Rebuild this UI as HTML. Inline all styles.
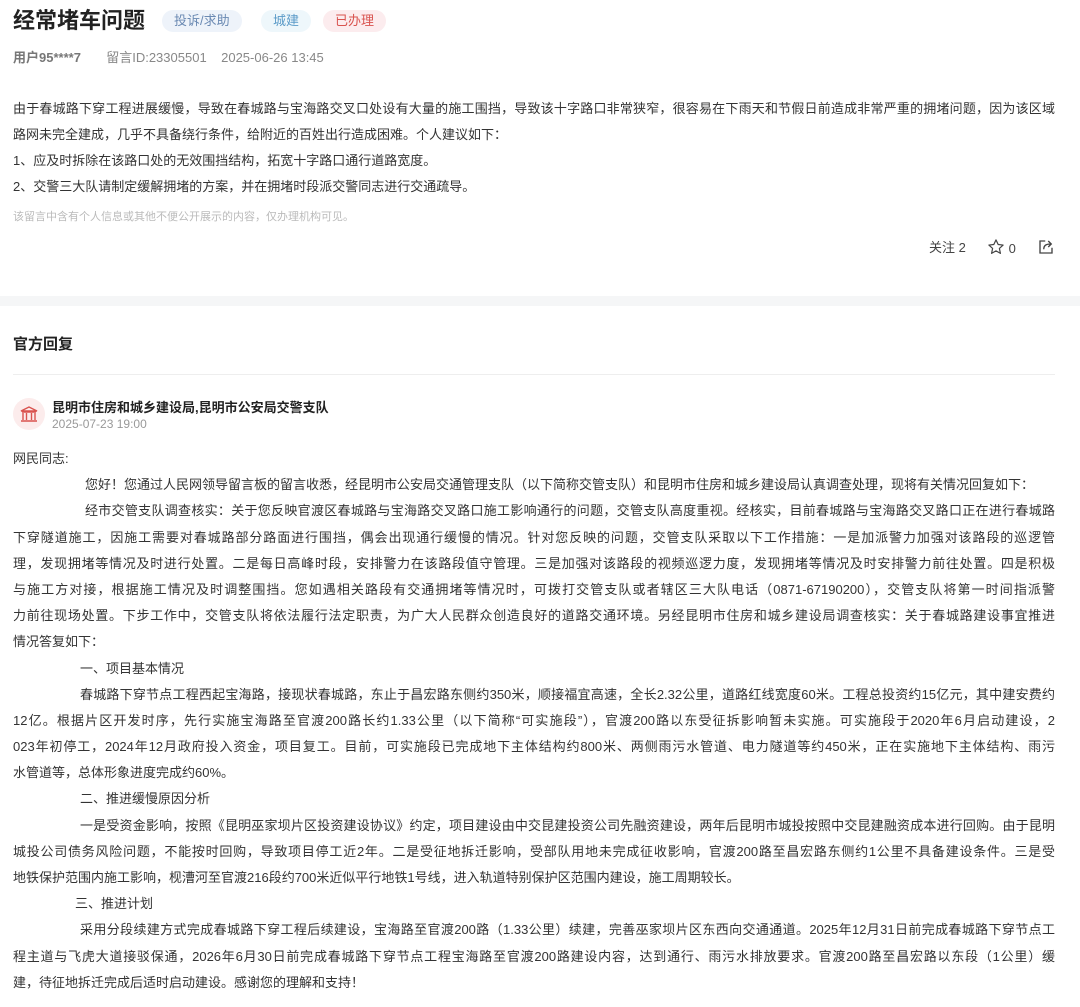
<!DOCTYPE html>
<html><head><meta charset="utf-8">
<style>
*{margin:0;padding:0;box-sizing:border-box}
body{width:1080px;height:1007px;overflow:hidden;background:#fff;font-family:"Liberation Sans","Noto Sans CJK SC",sans-serif;color:#333}
.t{position:absolute;left:13px;top:6px;font-size:22px;font-weight:bold;color:#222;line-height:30px}
.tag{position:absolute;top:10px;height:22px;line-height:22px;border-radius:11px;font-size:13px;padding:0 12px}
.meta{position:absolute;left:13px;top:49px;font-size:13px;color:#888;line-height:18px}
.meta b{color:#777}
.p{position:absolute;left:13px;width:1042px;font-size:13px;line-height:26px;color:#333}
.l{white-space:nowrap;height:26px}
.r .l{height:26.2px}
.j{text-align:justify;text-align-last:justify;white-space:normal;overflow:hidden}
.note{position:absolute;left:13px;top:208px;font-size:11px;color:#bbb}
.act{position:absolute;top:239px;font-size:13px;color:#444;line-height:18px}
.band{position:absolute;left:0;top:296px;width:1080px;height:10px;background:#f5f6f7}
.h{position:absolute;left:13px;top:333px;font-size:15px;font-weight:bold;color:#222}
.hr{position:absolute;left:13px;top:374px;width:1042px;height:1px;background:#eee}
.ic{position:absolute;left:13px;top:398px;width:32px;height:32px;border-radius:50%;background:#fcecec}
.nm{position:absolute;left:52px;top:397px;font-size:13px;font-weight:bold;color:#222}
.dt{position:absolute;left:52px;top:417px;font-size:12px;color:#999}
</style></head><body>
<div class="t">经常堵车问题</div>
<div class="tag" style="left:162px;background:#eef3fa;color:#6b8ab3">投诉/求助</div>
<div class="tag" style="left:261px;background:#eef7fb;color:#5b9bc8">城建</div>
<div class="tag" style="left:323px;background:#fcecee;color:#d9534f">已办理</div>
<div class="meta"><b>用户95****7</b>&nbsp;&nbsp;&nbsp;&nbsp;&nbsp;&nbsp;&nbsp;留言ID:23305501&nbsp;&nbsp;&nbsp;&nbsp;2025-06-26 13:45</div>
<div class="p" style="top:96px">
<div class="l j">由于春城路下穿工程进展缓慢，导致在春城路与宝海路交叉口处设有大量的施工围挡，导致该十字路口非常狭窄，很容易在下雨天和节假日前造成非常严重的拥堵问题，因为该区域</div>
<div class="l">路网未完全建成，几乎不具备绕行条件，给附近的百姓出行造成困难。个人建议如下：</div>
<div class="l">1、应及时拆除在该路口处的无效围挡结构，拓宽十字路口通行道路宽度。</div>
<div class="l">2、交警三大队请制定缓解拥堵的方案，并在拥堵时段派交警同志进行交通疏导。</div>
</div>
<div class="note">该留言中含有个人信息或其他不便公开展示的内容，仅办理机构可见。</div>
<div class="act" style="left:929px">关注 2</div>
<div class="act" style="left:987px;top:238px"><svg width="18" height="18" viewBox="0 0 24 24" style="vertical-align:-3px"><path d="M12 2.5l2.9 6.2 6.6.7-5 4.5 1.4 6.6L12 17.2l-5.9 3.3 1.4-6.6-5-4.5 6.6-.7z" fill="none" stroke="#444" stroke-width="1.6" stroke-linejoin="round"/></svg> 0</div>
<div class="act" style="left:1037px;top:238px"><svg width="18" height="18" viewBox="0 0 24 24"><path d="M11 4H4v16h16v-7" fill="none" stroke="#444" stroke-width="1.8"/><path d="M9 15c0-5 3-7 9-7M15 4l4 4-4 4" fill="none" stroke="#444" stroke-width="1.8"/></svg></div>
<div class="band"></div>
<div class="h">官方回复</div>
<div class="hr"></div>
<div class="ic"><svg width="32" height="32" viewBox="0 0 32 32"><path d="M8 13l8-4 8 4zM9 14h14M10 15v7M13.5 15v7M18.5 15v7M22 15v7M8 23h16" fill="none" stroke="#d9534f" stroke-width="1.4"/></svg></div>
<div class="nm">昆明市住房和城乡建设局,昆明市公安局交警支队</div>
<div class="dt">2025-07-23 19:00</div>
<div class="p r" style="top:446px;line-height:26.2px">
<div class="l">网民同志:</div>
<div class="l" style="padding-left:72px">您好！您通过人民网领导留言板的留言收悉，经昆明市公安局交通管理支队（以下简称交管支队）和昆明市住房和城乡建设局认真调查处理，现将有关情况回复如下：</div>
<div class="l j" style="padding-left:72px">经市交管支队调查核实：关于您反映官渡区春城路与宝海路交叉路口施工影响通行的问题，交管支队高度重视。经核实，目前春城路与宝海路交叉路口正在进行春城路</div>
<div class="l j">下穿隧道施工，因施工需要对春城路部分路面进行围挡，偶会出现通行缓慢的情况。针对您反映的问题，交管支队采取以下工作措施：一是加派警力加强对该路段的巡逻管</div>
<div class="l j">理，发现拥堵等情况及时进行处置。二是每日高峰时段，安排警力在该路段值守管理。三是加强对该路段的视频巡逻力度，发现拥堵等情况及时安排警力前往处置。四是积极</div>
<div class="l j">与施工方对接，根据施工情况及时调整围挡。您如遇相关路段有交通拥堵等情况时，可拨打交管支队或者辖区三大队电话（0871-67190200），交管支队将第一时间指派警</div>
<div class="l j">力前往现场处置。下步工作中，交管支队将依法履行法定职责，为广大人民群众创造良好的道路交通环境。另经昆明市住房和城乡建设局调查核实：关于春城路建设事宜推进</div>
<div class="l">情况答复如下：</div>
<div class="l" style="padding-left:67px">一、项目基本情况</div>
<div class="l j" style="padding-left:67px">春城路下穿节点工程西起宝海路，接现状春城路，东止于昌宏路东侧约350米，顺接福宜高速，全长2.32公里，道路红线宽度60米。工程总投资约15亿元，其中建安费约</div>
<div class="l j">12亿。根据片区开发时序，先行实施宝海路至官渡200路长约1.33公里（以下简称“可实施段”），官渡200路以东受征拆影响暂未实施。可实施段于2020年6月启动建设，2</div>
<div class="l j">023年初停工，2024年12月政府投入资金，项目复工。目前，可实施段已完成地下主体结构约800米、两侧雨污水管道、电力隧道等约450米，正在实施地下主体结构、雨污</div>
<div class="l">水管道等，总体形象进度完成约60%。</div>
<div class="l" style="padding-left:67px">二、推进缓慢原因分析</div>
<div class="l j" style="padding-left:67px">一是受资金影响，按照《昆明巫家坝片区投资建设协议》约定，项目建设由中交昆建投资公司先融资建设，两年后昆明市城投按照中交昆建融资成本进行回购。由于昆明</div>
<div class="l j">城投公司债务风险问题，不能按时回购，导致项目停工近2年。二是受征地拆迁影响，受部队用地未完成征收影响，官渡200路至昌宏路东侧约1公里不具备建设条件。三是受</div>
<div class="l">地铁保护范围内施工影响，枧漕河至官渡216段约700米近似平行地铁1号线，进入轨道特别保护区范围内建设，施工周期较长。</div>
<div class="l" style="padding-left:62px">三、推进计划</div>
<div class="l j" style="padding-left:67px">采用分段续建方式完成春城路下穿工程后续建设，宝海路至官渡200路（1.33公里）续建，完善巫家坝片区东西向交通通道。2025年12月31日前完成春城路下穿节点工</div>
<div class="l j">程主道与飞虎大道接驳保通，2026年6月30日前完成春城路下穿节点工程宝海路至官渡200路建设内容，达到通行、雨污水排放要求。官渡200路至昌宏路以东段（1公里）缓</div>
<div class="l">建，待征地拆迁完成后适时启动建设。感谢您的理解和支持！</div>
</div>
</body></html>
